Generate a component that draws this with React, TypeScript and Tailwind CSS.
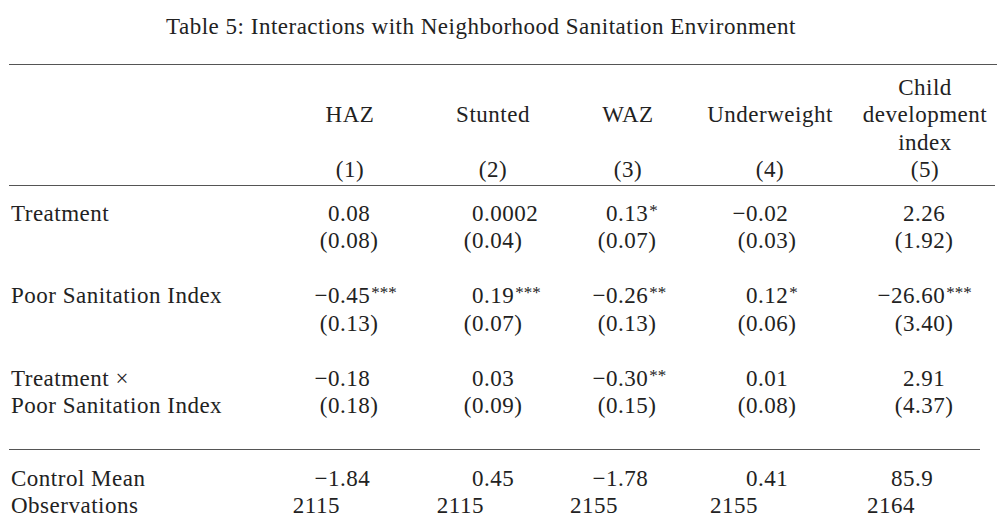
import React from 'react';

type Cell = { v: string; s?: string };

// column widths after the label column; decimal point sits at the end of the left part
const leftW = ['w-[60px]', 'w-[64px]', 'w-[52px]', 'w-[68px]', 'w-[65px]'];

const headers = [
  { label: ['HAZ'], n: '(1)' },
  { label: ['Stunted'], n: '(2)' },
  { label: ['WAZ'], n: '(3)' },
  { label: ['Underweight'], n: '(4)' },
  { label: ['Child', 'development', 'index'], n: '(5)' },
];

const rows: { label: string[]; coef: Cell[]; se: Cell[] }[] = [
  {
    label: ['Treatment', ''],
    coef: [{ v: '0.08' }, { v: '0.0002' }, { v: '0.13', s: '*' }, { v: '−0.02' }, { v: '2.26' }],
    se: [{ v: '(0.08)' }, { v: '(0.04)' }, { v: '(0.07)' }, { v: '(0.03)' }, { v: '(1.92)' }],
  },
  {
    label: ['Poor Sanitation Index', ''],
    coef: [
      { v: '−0.45', s: '***' },
      { v: '0.19', s: '***' },
      { v: '−0.26', s: '**' },
      { v: '0.12', s: '*' },
      { v: '−26.60', s: '***' },
    ],
    se: [{ v: '(0.13)' }, { v: '(0.07)' }, { v: '(0.13)' }, { v: '(0.06)' }, { v: '(3.40)' }],
  },
  {
    label: ['Treatment ×', 'Poor Sanitation Index'],
    coef: [{ v: '−0.18' }, { v: '0.03' }, { v: '−0.30', s: '**' }, { v: '0.01' }, { v: '2.91' }],
    se: [{ v: '(0.18)' }, { v: '(0.09)' }, { v: '(0.15)' }, { v: '(0.08)' }, { v: '(4.37)' }],
  },
];

const footer: { label: string; cells: Cell[] }[] = [
  { label: 'Control Mean', cells: [{ v: '−1.84' }, { v: '0.45' }, { v: '−1.78' }, { v: '0.41' }, { v: '85.9' }] },
  { label: 'Observations', cells: [{ v: '2115' }, { v: '2115' }, { v: '2155' }, { v: '2155' }, { v: '2164' }] },
];

const Num = ({ cell, col }: { cell: Cell; col: number }) => {
  const i = cell.v.indexOf('.');
  const left = i < 0 ? cell.v : cell.v.slice(0, i);
  const right = i < 0 ? '' : cell.v.slice(i);
  return (
    <div className="flex whitespace-nowrap">
      <span className={`${leftW[col]} shrink-0 text-right`}>{left}</span>
      <span>
        {right}
        {cell.s && (
          <span className="inline-block align-top text-[17px] leading-none tracking-[0px] ml-[1px] mt-[2px]">
            {cell.s}
          </span>
        )}
      </span>
    </div>
  );
};

const gridCls = 'grid grid-cols-[269px_140px_146px_124px_160px_150px] pl-[11px]';

export default function App() {
  return (
    <div className="w-[1000px] h-[523px] bg-white overflow-hidden text-[#222] text-[23px] leading-[27.5px] tracking-[0.5px] font-['Liberation_Serif',serif]">
      <div className="pt-[13px] text-center w-[962px]">
        Table 5: Interactions with Neighborhood Sanitation Environment
      </div>

      <div className="mt-[23px] ml-[9px] w-[988px] border-t-[1.5px] border-[#555]" />

      {/* header */}
      <div className={`${gridCls} mt-[9px]`}>
        <div />
        {headers.map((h) => (
          <div key={h.n} className="flex flex-col items-center text-center">
            <div className="h-[82.5px] flex flex-col justify-center">
              {h.label.map((l) => (
                <div key={l}>{l}</div>
              ))}
            </div>
            <div>{h.n}</div>
          </div>
        ))}
      </div>

      <div className="mt-[1px] ml-[9px] w-[986px] border-t-[1.5px] border-[#555]" />

      {/* body */}
      <div className="mt-[14px] flex flex-col gap-[27.5px]">
        {rows.map((r) => (
          <div key={r.label[0]} className={gridCls}>
            <div>
              <div>{r.label[0]}</div>
              <div className="h-[27.5px]">{r.label[1]}</div>
            </div>
            {r.coef.map((c, i) => (
              <div key={i}>
                <Num cell={c} col={i} />
                <Num cell={r.se[i]} col={i} />
              </div>
            ))}
          </div>
        ))}
      </div>

      <div className="mt-[29px] ml-[9px] w-[971px] border-t-[1.5px] border-[#555]" />

      <div className="mt-[15px]">
        {footer.map((f) => (
          <div key={f.label} className={gridCls}>
            <div>{f.label}</div>
            {f.cells.map((c, i) => (
              <Num key={i} cell={c} col={i} />
            ))}
          </div>
        ))}
      </div>
    </div>
  );
}
